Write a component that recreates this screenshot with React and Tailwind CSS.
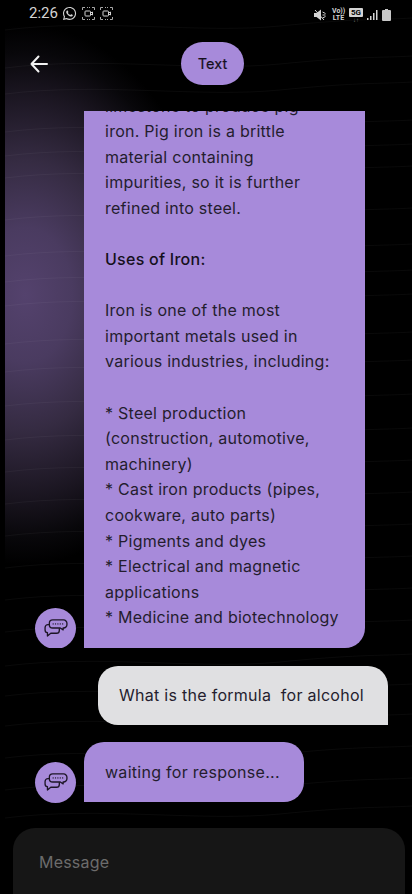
import React from "react";
import { FaWhatsapp } from "react-icons/fa";

function Frame() {
  return (
    <svg width="13" height="13" viewBox="0 0 13 13" fill="none" stroke="#a8a8a8" strokeWidth="1">
      <path d="M.5 3V.5H3M10 .5h2.500V3M12.500 10v2.500H10M3 12.500H.5V10" />
      <path d="M5 .5h3M5 12.500h3" strokeDasharray="1 1" />
      <rect x="3" y="4" width="5.500" height="5" rx=".8" stroke="#d4d4d4" />
      <path d="M8.500 6l2-1v3l-2-1" stroke="#d4d4d4" />
    </svg>
  );
}

function Bot() {
  return (
    <div className="flex h-[41px] w-[41px] shrink-0 items-center justify-center rounded-full bg-[#a78ada]">
      <svg width="24" height="19" viewBox="0 0 25 20" fill="none" stroke="#1d1526" strokeWidth="1.400" strokeLinejoin="round" strokeLinecap="round">
        <path d="M9 1h11.500a3.500 3.500 0 0 1 3.500 3.500v1.500a3.500 3.500 0 0 1-3.500 3.500H20v2l-3-2H9A3.500 3.500 0 0 1 5.500 6V4.500A3.500 3.500 0 0 1 9 1z" />
        <path d="M5.500 6H4a3 3 0 0 0-3 3v2.500A3 3 0 0 0 3.500 14.500v3.500l3.500-3h6a3 3 0 0 0 3-3v-1.800" />
        <path d="M9.500 5.200h.01M12 5.200h.01M14.500 5.200h.01M17 5.200h.01M19.500 5.200h.01" strokeWidth="1.400" />
      </svg>
    </div>
  );
}

const waves = [24, 62, 88, 126, 150, 172, 214, 250, 276, 300, 338, 366, 400, 434, 466, 498, 530, 562, 594, 626, 660, 690, 720, 752, 784, 812];

export default function App() {
  return (
    <div className="relative flex h-[894px] w-[412px] flex-col overflow-hidden bg-black font-['Inter',sans-serif] text-[#241d2e]">
      {/* backdrop */}
      <div className="pointer-events-none absolute inset-y-0 left-[5px] right-0 bg-[radial-gradient(ellipse_190px_270px_at_20px_295px,#54426d_0%,#4a3b60_25%,#352b42_50%,#1a1520_75%,#08070a_90%,#000000_100%)]" />
      <svg className="pointer-events-none absolute inset-0" width="412" height="894" fill="none">
        {waves.map((y) => (
          <path key={y} d={`M5 ${y + 6} C 100 ${y - 6}, 200 ${y + 10}, 280 ${y + 2} S 380 ${y - 4}, 412 ${y - 6}`} stroke="#ffffff" strokeOpacity="0.04" strokeWidth="1" />
        ))}
      </svg>

      {/* status bar */}
      <div className="relative flex h-[22px] shrink-0 items-end justify-between pl-[29px] pr-[21px] font-['Roboto',sans-serif] text-[#d4d4d4]">
        <div className="flex items-center gap-[4px]">
          <span className="text-[15px] leading-[18px]">2:26</span>
          <FaWhatsapp className="text-[15px]" />
          <span className="ml-[1px] flex gap-[5px]"><Frame /><Frame /></span>
        </div>
        <div className="flex items-center gap-[4px]">
          <svg width="12" height="12" viewBox="0 0 12 12" fill="#d4d4d4">
            <path d="M0 4h2.500L7 .5v11L2.500 8H0z" />
            <path d="M8.500 3l3 1.500M8.500 6h3M8.500 9l3-1.500M1 1l9 10" stroke="#d4d4d4" strokeWidth="1" />
          </svg>
          <span className="ml-[2px] flex w-[13px] flex-col text-center text-[7px] font-bold leading-[7px]"><span>Vo))</span><span>LTE</span></span>
          <span className="flex w-[14px] flex-col items-center">
            <span className="w-full rounded-[1px] bg-[#d4d4d4] text-center text-[8px] font-bold leading-[9px] text-black">5G</span>
            <span className="text-[6px] leading-[5px] text-[#777]">↓↑</span>
          </span>
          <svg width="11" height="12" viewBox="0 0 11 12" fill="#d4d4d4"><rect x="0" y="9" width="1.500" height="2" /><rect x="3" y="7" width="1.500" height="4" /><rect x="6" y="4" width="1.500" height="7" /><rect x="9" y="1" width="1.500" height="10" /></svg>
          <svg width="9" height="12" viewBox="0 0 9 12"><path d="M3 0h3v1h2a1 1 0 0 1 1 1v9a1 1 0 0 1-1 1H1a1 1 0 0 1-1-1V2a1 1 0 0 1 1-1h2z" fill="#c8c8c8" /></svg>
        </div>
      </div>

      {/* header */}
      <div className="relative mt-[20px] flex h-[43px] shrink-0 items-center pl-[30px]">
        <svg width="18" height="18" viewBox="0 0 18 18" fill="none" stroke="#f2f2f2" strokeWidth="2" strokeLinecap="round" strokeLinejoin="round">
          <path d="M17 9H1.500M8.500 1.500L1.500 9l7 7.500" />
        </svg>
        <div className="ml-[133px] flex h-[43px] w-[63px] items-center justify-center rounded-full bg-[#a78ada] text-[14.500px] font-normal text-[#15101c] [-webkit-text-stroke:0.2px_#15101c]">Text</div>
      </div>

      {/* long reply */}
      <div className="relative mt-[26px] flex h-[537px] shrink-0 items-end overflow-hidden pl-[35px]">
        <div className="mb-[-1px]"><Bot /></div>
        <div className="ml-[8px] w-[281px] shrink-0 rounded-br-[20px] bg-[#a78ada] pb-[17px] pl-[21px] pr-[20px] text-[16px] leading-[25.600px] tracking-[0.26px]">
          <p>limestone to produce pig<br />iron. Pig iron is a brittle<br />material containing<br />impurities, so it is further<br />refined into steel.</p>
          <p className="mt-[25.600px] font-medium text-[#15101c]">Uses of Iron:</p>
          <p className="mt-[25.600px]">Iron is one of the most important metals used in various industries, including:</p>
          <p className="mt-[25.600px]">* Steel production (construction, automotive, machinery)</p>
          <p>* Cast iron products (pipes, cookware, auto parts)</p>
          <p>* Pigments and dyes</p>
          <p>* Electrical and magnetic applications</p>
          <p>* Medicine and biotechnology</p>
        </div>
      </div>

      {/* user message */}
      <div className="relative mt-[18px] flex shrink-0 justify-end pr-[24px]">
        <div className="flex h-[59px] w-[290px] items-center whitespace-pre rounded-t-[20px] rounded-bl-[20px] bg-[#e0e0e2] pb-[1px] pl-[21px] text-[16px] tracking-[0.28px]">What is the formula  for alcohol</div>
      </div>

      {/* pending reply */}
      <div className="relative mt-[17px] flex shrink-0 items-end pl-[35px]">
        <div className="mb-[-1px]"><Bot /></div>
        <div className="ml-[8px] flex h-[60px] w-[220px] items-center rounded-t-[20px] rounded-br-[20px] bg-[#a78ada] pl-[21px] text-[16px] tracking-[0.28px]">waiting for response...</div>
      </div>

      {/* composer */}
      <div className="relative mx-[13px] mr-[7px] mt-[26px] flex min-h-0 flex-1 items-start rounded-t-[22px] bg-[#161616] pl-[26px] pt-[23px] text-[16px] leading-[22px] tracking-[0.2px] text-[#6c6c6c]">Message</div>
    </div>
  );
}
